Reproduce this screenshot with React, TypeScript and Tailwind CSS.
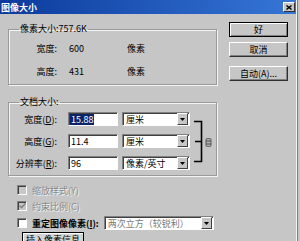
import React from "react";

const disabledText = "text-[#8a8a8a] [text-shadow:1px_1px_0_#f4f4f4]";

function Arrow() {
  return (
    <div className="w-[11px] h-[12px] bg-[#c6c6c6] border border-t-white border-l-white border-b-[#404040] border-r-[#404040] flex items-center justify-center">
      <svg width="5" height="3" viewBox="0 0 5 3">
        <path d="M0 0H5L2.5 3Z" fill="#000" />
      </svg>
    </div>
  );
}

function Select({ value, width, muted }: { value: string; width: string; muted?: boolean }) {
  return (
    <div className={`${width} h-[14px] bg-white border border-[#808080] border-b-white border-r-white shadow-[inset_1px_1px_0_#404040] flex items-center justify-between pl-[3px] pr-[1px]`}>
      <span className={`text-[9px] leading-none ${muted ? "text-[#7a7a7a]" : "text-black"}`}>{value}</span>
      <Arrow />
    </div>
  );
}

function Input({ children }: { children: React.ReactNode }) {
  return (
    <div className="w-[50px] h-[14px] bg-white border border-[#808080] border-b-white border-r-white shadow-[inset_1px_1px_0_#404040] flex items-center pl-[1px]">
      {children}
    </div>
  );
}

function Button({ label, primary }: { label: string; primary?: boolean }) {
  return (
    <div
      className={`w-[59px] h-[15px] flex items-center justify-center text-[9px] leading-none text-black bg-[#c6c6c6] ${
        primary
          ? "border border-black shadow-[inset_1px_1px_0_#fff,inset_-1px_-1px_0_#808080]"
          : "border border-t-white border-l-white border-b-[#303030] border-r-[#303030] shadow-[inset_-1px_-1px_0_#808080]"
      }`}
    >
      {label}
    </div>
  );
}

function Check({ checked, disabled }: { checked?: boolean; disabled?: boolean }) {
  return (
    <div
      className={`w-[10px] h-[10px] border border-[#808080] border-b-white border-r-white shadow-[inset_1px_1px_0_#404040] flex items-center justify-center ${
        disabled ? "bg-[#c6c6c6]" : "bg-white"
      }`}
    >
      {checked && (
        <svg width="7" height="6" viewBox="0 0 7 6">
          <path d="M0.5 2.5L2.5 4.5L6.5 0.5" stroke="#808080" strokeWidth="1.5" fill="none" />
        </svg>
      )}
    </div>
  );
}

function Group({ legend, children }: { legend: string; children: React.ReactNode }) {
  return (
    <fieldset className="w-[209px] border border-[#9a9a9a] shadow-[1px_1px_0_#f4f4f4,inset_1px_1px_0_#f4f4f4]">
      <legend className="ml-[10px] px-[1px] text-[9px] leading-[12px] text-black">{legend}</legend>
      {children}
    </fieldset>
  );
}

export default function App() {
  return (
    <div className="w-[300px] h-[241px] overflow-hidden bg-[#c6c6c6] font-['Noto_Sans_CJK_SC',sans-serif]">
      <div className="w-[297px] h-[241px] border-r border-r-[#f4f4f4] shadow-[1px_0_0_#808080]">
        {/* title bar */}
        <div className="h-[14px] bg-gradient-to-r from-[#0c3a9c] to-[#3676d6] flex items-center justify-between pl-[1px] pr-[1px]">
          <span className="text-[9px] leading-none font-bold text-white">图像大小</span>
          <div className="w-[12px] h-[10px] bg-[#c6c6c6] border border-t-white border-l-white border-b-[#303030] border-r-[#303030] flex items-center justify-center">
            <svg width="6" height="5" viewBox="0 0 6 5">
              <path d="M0.5 0.5L5.5 4.5M5.5 0.5L0.5 4.5" stroke="#000" strokeWidth="1.4" />
            </svg>
          </div>
        </div>

        <div className="flex">
          <div className="pl-[8px] w-[217px]">
            <div className="mt-[9px]">
              <Group legend="像素大小:757.6K">
                <div className="flex items-center h-[14px] mt-[6px] text-[9px] leading-none text-black">
                  <span className="w-[48px] text-right">宽度:</span>
                  <span className="ml-[12px] w-[58px]">600</span>
                  <span>像素</span>
                </div>
                <div className="flex items-center h-[14px] mt-[9px] mb-[6px] text-[9px] leading-none text-black">
                  <span className="w-[48px] text-right">高度:</span>
                  <span className="ml-[12px] w-[58px]">431</span>
                  <span>像素</span>
                </div>
              </Group>
            </div>

            <div className="mt-[11px]">
              <Group legend="文档大小:">
                <div className="flex items-center mt-[4px] mb-[5px]">
                  <div className="flex flex-col gap-[8px]">
                    <div className="flex items-center h-[14px] text-[9px] leading-none text-black">
                      <span className="w-[48px] text-right">宽度(<u>D</u>):</span>
                      <div className="ml-[11px]">
                        <Input>
                          <span className="bg-[#0a246a] text-white text-[9px] leading-[11px] px-[1px]">15.88</span>
                        </Input>
                      </div>
                      <div className="ml-[4px]">
                        <Select value="厘米" width="w-[68px]" />
                      </div>
                    </div>
                    <div className="flex items-center h-[14px] text-[9px] leading-none text-black">
                      <span className="w-[48px] text-right">高度(<u>G</u>):</span>
                      <div className="ml-[11px]">
                        <Input>
                          <span className="text-[9px] leading-none px-[1px]">11.4</span>
                        </Input>
                      </div>
                      <div className="ml-[4px]">
                        <Select value="厘米" width="w-[68px]" />
                      </div>
                    </div>
                    <div className="flex items-center h-[14px] text-[9px] leading-none text-black">
                      <span className="w-[48px] text-right whitespace-nowrap">分辨率(<u>R</u>):</span>
                      <div className="ml-[11px]">
                        <Input>
                          <span className="text-[9px] leading-none px-[1px]">96</span>
                        </Input>
                      </div>
                      <div className="ml-[4px]">
                        <Select value="像素/英寸" width="w-[68px]" />
                      </div>
                    </div>
                  </div>
                  <svg width="20" height="46" viewBox="0 0 20 46" className="ml-[4px]">
                    <path d="M0 3.5H7.5V43.5H0M1 23.5H7.5" stroke="#000" strokeWidth="1.6" fill="none" />
                    <rect x="12" y="20.5" width="5" height="8" rx="1.5" stroke="#6a6a6a" strokeWidth="1.2" fill="#b0b0b0" />
                    <path d="M12 23H17M12 26H17" stroke="#505050" strokeWidth="1" />
                  </svg>
                </div>
              </Group>
            </div>

            <div className="pl-[9px] mt-[8px] text-[9px] leading-none">
              <div className="flex items-center h-[12px] gap-[5px]">
                <Check disabled />
                <span className={disabledText}>缩放样式(Y)</span>
              </div>
              <div className="flex items-center h-[12px] gap-[5px] mt-[4px]">
                <Check checked disabled />
                <span className={disabledText}>约束比例(C)</span>
              </div>
              <div className="flex items-center h-[16px] gap-[5px] mt-[3px]">
                <Check />
                <span className="text-black font-bold whitespace-nowrap">重定图像像素(<u>I</u>):</span>
                <Select value="两次立方（较锐利）" width="w-[110px]" muted />
              </div>
              <div className="mt-[1px] ml-[5px] w-[62px] h-[14px] border border-black border-b-[#303030] bg-[#d4d4d4] shadow-[inset_1px_1px_0_#fff] flex items-start justify-center pt-[2px]">
                <span className="text-black whitespace-nowrap">插入像素信息</span>
              </div>
            </div>
          </div>

          <div className="ml-[12px] mt-[8px] flex flex-col">
            <Button label="好" primary />
            <div className="mt-[5px]">
              <Button label="取消" />
            </div>
            <div className="mt-[9px]">
              <Button label="自动(A)..." />
            </div>
          </div>
        </div>
      </div>
    </div>
  );
}
